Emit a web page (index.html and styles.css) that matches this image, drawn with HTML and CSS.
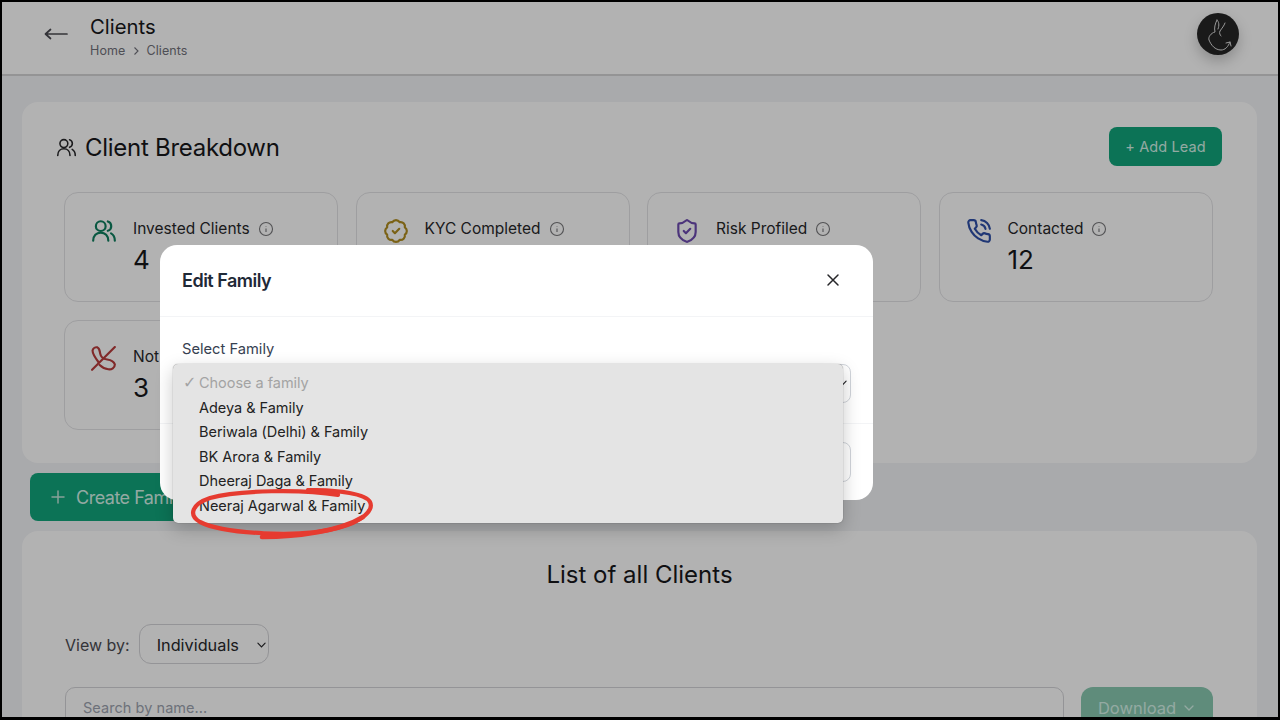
FILE: index.html
```html
<!DOCTYPE html>
<html lang="en">
<head>
<meta charset="utf-8">
<title>Clients</title>
<link rel="stylesheet" href="styles.css">
</head>
<body>
<div class="frame">
  <header class="topbar">
    <div class="topbar-left">
      <svg class="back" viewBox="0 0 24 12" fill="none" stroke="#4b4b52" stroke-width="1.7" stroke-linecap="round" stroke-linejoin="round"><path d="M1.500 6H23M6.500 1.500 1.500 6l5 4.500"/></svg>
      <div>
        <div class="page-title">Clients</div>
        <div class="crumbs"><span>Home</span><svg class="crumb-sep" viewBox="0 0 8 10" fill="none" stroke="#71717a" stroke-width="1.1"><path d="m2.500 1.500 3.500 3.500-3.500 3.500"/></svg><span>Clients</span></div>
      </div>
    </div>
    <div class="avatar">
      <svg viewBox="0 0 42 42" fill="none" stroke="#dcdcdc" stroke-width="1" stroke-linecap="round" stroke-linejoin="round"><path d="M20 7c-2 4-3 8-2 12-4 1-7 5-6 8 2 5 6 10 12 10 4 0 7-3 9-8"/><path d="M20 7c2 2 2.500 5 1 9"/><path d="M28 10c-1 3-3 5-5 8-1 2 0 4 1 5"/><path d="m29 30 4-1 1 4"/></svg>
    </div>
  </header>

  <main class="content">
    <section class="card breakdown">
      <div class="breakdown-head">
        <h1 class="section-title">
          <svg class="title-icon" viewBox="0 0 24 24" fill="none" stroke="#27272a" stroke-width="1.800" stroke-linecap="round"><circle cx="9" cy="7.500" r="4.500"/><path d="M2 21c0-4.500 3-7.500 7-7.500s7 3 7 7.500M15.500 3.200a4.500 4.500 0 0 1 0 8.600M18.500 14.200C20.800 15.500 22 18 22 21"/></svg>
          Client Breakdown
        </h1>
        <button class="btn-green add-lead">+ Add Lead</button>
      </div>
      <div class="stats">
        <div class="stat">
          <svg class="stat-icon" viewBox="0 0 24 24" fill="none" stroke="#0f7f5f" stroke-width="2" stroke-linecap="round"><circle cx="9" cy="7.500" r="4.500"/><path d="M2 21c0-4.500 3-7.500 7-7.500s7 3 7 7.500M15.500 3.200a4.500 4.500 0 0 1 0 8.600M18.500 14.200C20.800 15.500 22 18 22 21"/></svg>
          <div><div class="stat-label">Invested Clients <svg class="info" viewBox="0 0 16 16" fill="none" stroke="#77777a" stroke-width="1.100"><circle cx="8" cy="8" r="6.500"/><path d="M8 7.500v3.500M8 5v.6"/></svg></div><div class="stat-value">4</div></div>
        </div>
        <div class="stat">
          <svg class="stat-icon" viewBox="0 0 24 24" fill="none" stroke="#b08d20" stroke-width="2" stroke-linecap="round" stroke-linejoin="round"><path d="M3.850 8.620a4 4 0 0 1 4.780-4.770 4 4 0 0 1 6.740 0 4 4 0 0 1 4.780 4.780 4 4 0 0 1 0 6.740 4 4 0 0 1-4.770 4.780 4 4 0 0 1-6.750 0 4 4 0 0 1-4.780-4.770 4 4 0 0 1 0-6.760Z"/><path d="m9 12 2 2 4-4"/></svg>
          <div><div class="stat-label">KYC Completed <svg class="info" viewBox="0 0 16 16" fill="none" stroke="#77777a" stroke-width="1.100"><circle cx="8" cy="8" r="6.500"/><path d="M8 7.500v3.500M8 5v.6"/></svg></div><div class="stat-value">2</div></div>
        </div>
        <div class="stat">
          <svg class="stat-icon" viewBox="0 0 24 24" fill="none" stroke="#6d4bb0" stroke-width="2" stroke-linecap="round" stroke-linejoin="round"><path d="M20 13c0 5-3.500 7.500-7.660 8.950a1 1 0 0 1-.67-.01C7.500 20.500 4 18 4 13V6a1 1 0 0 1 1-1c2 0 4.500-1.200 6.240-2.720a1.170 1.170 0 0 1 1.520 0C14.510 3.810 17 5 19 5a1 1 0 0 1 1 1z"/><path d="m9 12 2 2 4-4"/></svg>
          <div><div class="stat-label">Risk Profiled <svg class="info" viewBox="0 0 16 16" fill="none" stroke="#77777a" stroke-width="1.100"><circle cx="8" cy="8" r="6.500"/><path d="M8 7.500v3.500M8 5v.6"/></svg></div><div class="stat-value">2</div></div>
        </div>
        <div class="stat">
          <svg class="stat-icon" viewBox="0 0 24 24" fill="none" stroke="#2f50a8" stroke-width="2" stroke-linecap="round" stroke-linejoin="round"><path d="M22 16.920v3a2 2 0 0 1-2.180 2 19.790 19.790 0 0 1-8.630-3.070 19.500 19.500 0 0 1-6-6 19.790 19.790 0 0 1-3.070-8.670A2 2 0 0 1 4.110 2h3a2 2 0 0 1 2 1.720 12.840 12.840 0 0 0 .7 2.810 2 2 0 0 1-.45 2.110L8.090 9.910a16 16 0 0 0 6 6l1.270-1.270a2 2 0 0 1 2.110-.45 12.840 12.840 0 0 0 2.810.7A2 2 0 0 1 22 16.920z"/><path d="M14.050 2a9 9 0 0 1 8 7.940M14.050 6A5 5 0 0 1 18 10"/></svg>
          <div><div class="stat-label">Contacted <svg class="info" viewBox="0 0 16 16" fill="none" stroke="#77777a" stroke-width="1.100"><circle cx="8" cy="8" r="6.500"/><path d="M8 7.500v3.500M8 5v.6"/></svg></div><div class="stat-value">12</div></div>
        </div>
        <div class="stat">
          <svg class="stat-icon" viewBox="0 0 24 24" fill="none" stroke="#b93c3c" stroke-width="2" stroke-linecap="round" stroke-linejoin="round"><path d="M7 15C4 11 1 7 1.500 4 2 2 4 .8 6 1.300 8 2 8 5 8.500 7 9 10 11 12 15 12.500 18 13 21 14 22 17c0 3-3 5-6 4.500-4-.5-6-2-8-4"/><path d="M22 1 1 22"/></svg>
          <div><div class="stat-label">Not Contacted <svg class="info" viewBox="0 0 16 16" fill="none" stroke="#77777a" stroke-width="1.100"><circle cx="8" cy="8" r="6.500"/><path d="M8 7.500v3.500M8 5v.6"/></svg></div><div class="stat-value">3</div></div>
        </div>
      </div>
    </section>

    <button class="btn-green create-family"><svg class="plus" viewBox="0 0 14 14" fill="none" stroke="#c3e6da" stroke-width="1.500" stroke-linecap="round"><path d="M7 1v12M1 7h12"/></svg>Create Family</button>

    <section class="card clients">
      <h2 class="list-title">List of all Clients</h2>
      <div class="view-row">
        <span class="view-label">View by:</span>
        <div class="view-select">Individuals<svg class="chev" viewBox="0 0 10 6" fill="none" stroke="#27272a" stroke-width="1.300" stroke-linecap="round"><path d="m1 1 4 4 4-4"/></svg></div>
      </div>
      <div class="search-row">
        <div class="search">Search by name...</div>
        <button class="download">Download<svg class="chev-dl" viewBox="0 0 10 6" fill="none" stroke="#d4f3e8" stroke-width="1.300" stroke-linecap="round"><path d="m1 1 4 4 4-4"/></svg></button>
      </div>
    </section>
  </main>

  <div class="overlay"></div>

  <div class="modal">
    <div class="modal-head">
      <span class="modal-title">Edit Family</span>
      <svg class="close" viewBox="0 0 14 14" fill="none" stroke="#27272a" stroke-width="1.500" stroke-linecap="round"><path d="m2 2 10 10M12 2 2 12"/></svg>
    </div>
    <div class="modal-body">
      <div class="field-label">Select Family</div>
      <div class="field-select"><svg class="field-chev" viewBox="0 0 10 6" fill="none" stroke="#27272a" stroke-width="1.300" stroke-linecap="round"><path d="m1 1 4 4 4-4"/></svg></div>
      <ul class="menu">
        <li class="menu-item is-current"><span class="tick">✓</span>Choose a family</li>
        <li class="menu-item">Adeya &amp; Family</li>
        <li class="menu-item">Beriwala (Delhi) &amp; Family</li>
        <li class="menu-item">BK Arora &amp; Family</li>
        <li class="menu-item">Dheeraj Daga &amp; Family</li>
        <li class="menu-item">Neeraj Agarwal &amp; Family</li>
      </ul>
    </div>
    <div class="modal-foot"><div class="foot-btn"></div></div>
  </div>

  <svg class="scribble" viewBox="0 0 190 56" fill="none" stroke="#e63b30" stroke-linecap="round" stroke-linejoin="round"><path stroke-width="4.200" d="M150 7C115 1 50 2 22 10 4 16 0 27 12 34c24 12 100 16 138 6 24-6 36-18 32-26-4-8-30-12-62-12"/><path stroke-width="4.600" d="M74 49c36 0 78-6 101-20"/></svg>
</div>
</body>
</html>
```
FILE: styles.css
```css
* { box-sizing: border-box; }
html, body { margin: 0; padding: 0; }
body { font-family: Inter, "Liberation Sans", sans-serif; color: #18181b; background: #000; }
.frame { position: relative; width: 1280px; height: 720px; overflow: hidden; border: 2px solid #000; border-bottom-width: 3px; background: #f3f4f7; }
.topbar { height: 74px; background: #fff; border-bottom: 2px solid #d4d4d6; display: flex; align-items: flex-start; justify-content: space-between; padding: 12px 39px 0 42px; }
.topbar-left { display: flex; align-items: flex-start; gap: 22px; }
.back { width: 24px; height: 12px; margin-top: 14px; }
.page-title { font-size: 20.300px; line-height: 26px; color: #18181b; }
.crumbs { display: flex; align-items: center; gap: 6.500px; font-size: 12.500px; line-height: 18px; color: #71717a; margin-top: 2px; letter-spacing: .1px; }
.crumb-sep { width: 8px; height: 10px; }
.avatar { width: 42px; height: 42px; border-radius: 50%; background: #262626; box-shadow: 0 6px 14px rgba(0,0,0,.22); margin-top: -1px; }
.avatar svg { display: block; width: 42px; height: 42px; }
.content { padding: 26px 21px 0 20px; display: flex; flex-direction: column; align-items: flex-start; }
.card { width: 100%; background: #fff; border-radius: 16px; }
.breakdown { padding: 25px 35px 33px 33px; height: 361px; }
.breakdown-head { display: flex; align-items: center; justify-content: space-between; height: 39px; }
.section-title { display: flex; align-items: center; gap: 8px; margin: 2px 0 0; font-size: 24px; font-weight: 400; letter-spacing: -.28px; color: #18181b; }
.title-icon { width: 21px; height: 21px; margin-left: 1px; }
.btn-green { border: 0; background: #12a57c; color: #d4f3e8; font-family: inherit; }
.add-lead { width: 113px; height: 39px; border-radius: 8px; font-size: 14.500px; letter-spacing: .1px; }
.stats { display: grid; grid-template-columns: repeat(4, 274px); column-gap: 17.500px; row-gap: 18.500px; margin: 26px 0 0 9px; }
.stat { height: 109.500px; border: 1px solid #e3e3e6; border-radius: 14px; padding: 25px 26px; display: flex; gap: 16px; background: #fff; }
.stat-icon { width: 26px; height: 26px; flex: none; }
.stat-label { display: flex; align-items: center; gap: 8px; font-size: 15.500px; line-height: 22px; color: #27272a; white-space: nowrap; }
.info { width: 16px; height: 16px; }
.stat-value { font-size: 26px; line-height: 34px; margin-top: 3px; color: #18181b; }
.create-family { width: 170px; height: 48px; margin: 10px 0 10px 8px; border-radius: 8px; display: flex; align-items: center; gap: 11px; padding: 0 0 0 21px; font-size: 18px; letter-spacing: -.5px; white-space: nowrap; overflow: hidden; }
.plus { width: 14px; height: 14px; flex: none; }
.clients { padding: 28px 43px 0; height: 300px; }
.list-title { margin: 0; text-align: center; font-size: 24px; font-weight: 400; line-height: 32px; color: #18181b; }
.view-row { display: flex; align-items: center; gap: 9px; margin-top: 33px; }
.view-label { font-size: 16px; line-height: 22px; color: #4b4b52; padding-top: 1px; }
.view-select { width: 130px; height: 40px; border: 1px solid #d4d4d8; border-radius: 12px; padding: 1px 0 0 17px; display: flex; align-items: center; justify-content: space-between; font-size: 16.300px; color: #27272a; }
.chev { width: 9px; height: 6px; margin-right: 2px; }
.search-row { display: flex; gap: 17px; margin-top: 23px; }
.search { width: 999px; height: 42px; border: 1px solid #d4d4d8; border-radius: 10px; padding: 11px 17px; font-size: 14.500px; line-height: 18px; color: #9ca3af; letter-spacing: .05px; }
.download { width: 132px; height: 42px; border: 0; border-radius: 12px; background: #88c9b1; color: #d4f3e8; font-family: inherit; font-size: 16.500px; display: flex; align-items: center; justify-content: center; gap: 8px; padding: 0 2px 0 0; flex: none; }
.chev-dl { width: 10px; height: 6px; flex: none; }
.overlay { position: absolute; inset: 0; background: rgba(0,0,0,.3); }
.modal { position: absolute; left: 158px; top: 243px; width: 713px; height: 255px; background: #fff; border-radius: 17px; display: flex; flex-direction: column; }
.modal-head { height: 72px; border-bottom: 1px solid #f3f4f6; display: flex; align-items: center; justify-content: space-between; padding: 0 33px 1px 22px; }
.modal-title { font-size: 18px; font-weight: 600; letter-spacing: -.5px; color: #1f2937; }
.close { width: 14px; height: 14px; }
.modal-body { position: relative; height: 107px; padding: 23px 22px 0; border-bottom: 1px solid #f3f4f6; }
.field-label { font-size: 14.700px; line-height: 18px; color: #374151; }
.field-select { position: relative; height: 39px; margin-top: 6px; border: 1px solid #d1d5db; border-radius: 8px; }
.field-chev { position: absolute; right: 3px; top: 15px; width: 9px; height: 6px; }
.menu { position: absolute; left: 13px; top: 47px; width: 670px; height: 159px; margin: 0; padding: 7px 0 0; list-style: none; background: #e4e4e4; border-radius: 5px; box-shadow: 0 0 1px rgba(0,0,0,.55), 0 6px 18px rgba(0,0,0,.22); }
.menu-item { position: relative; height: 24.500px; padding-left: 26px; font-size: 14.500px; line-height: 24.500px; color: #222; white-space: nowrap; letter-spacing: -.03px; }
.is-current { color: #a3a3a3; }
.tick { position: absolute; left: 10px; font-family: "DejaVu Sans", sans-serif; font-size: 16px; }
.modal-foot { flex: 1; padding: 18px 22px 0 0; display: flex; justify-content: flex-end; }
.foot-btn { width: 100px; height: 40px; border: 1px solid #d1d5db; border-radius: 8px; }
.scribble { position: absolute; left: 186px; top: 486px; width: 190px; height: 56px; }
```
